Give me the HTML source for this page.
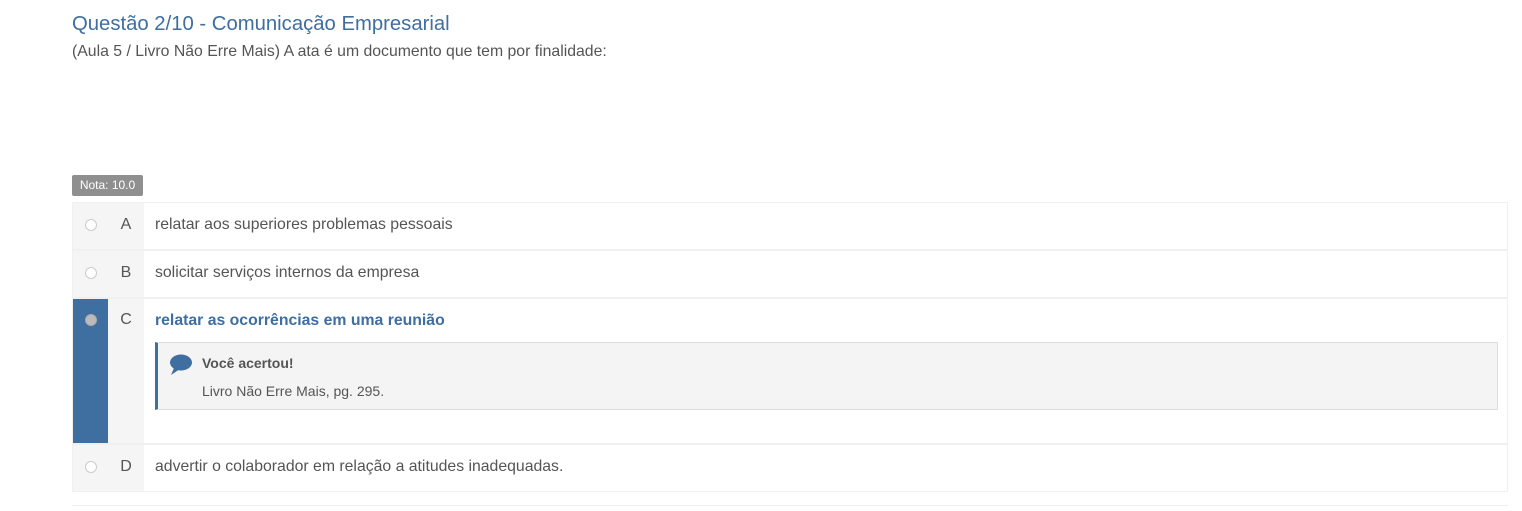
<!DOCTYPE html>
<html><head><meta charset="utf-8"><style>
body{margin:0;background:#fff;width:1522px;height:511px;overflow:hidden;font-family:"Liberation Sans",Arial,sans-serif;position:relative}
.t{position:absolute;left:72px;top:13px;font-size:20.3px;color:#3f6ea0}
.q{position:absolute;left:72px;top:43px;font-size:15.8px;color:#555}
.nota{position:absolute;left:72px;top:175px;width:71px;height:21px;background:#8f8f8f;color:#fff;font-size:12px;line-height:21px;text-align:center;border-radius:2px}
.row{position:absolute;left:72px;width:1436px;border:1px solid #f0f0f0;box-sizing:border-box}
.rad{position:absolute;left:0;top:0;bottom:0;width:36px;background:#f5f5f5}
.let{position:absolute;left:35px;top:0;bottom:0;width:36px;background:#f5f5f5;color:#555;font-size:16px;text-align:center}
.rc{position:absolute;left:12px;width:12px;height:12px;border:1px solid #ccc;border-radius:50%;background:#fff;box-sizing:border-box}
.txt{position:absolute;left:82px;font-size:15.8px;color:#555}
</style></head><body>
<div class="t">Questão 2/10 - Comunicação Empresarial</div>
<div class="q">(Aula 5 / Livro Não Erre Mais) A ata é um documento que tem por finalidade:</div>
<div class="nota">Nota: 10.0</div>

<div class="row" style="top:202px;height:48px"><div class="rad"><div class="rc" style="top:16px"></div></div><div class="let" style="line-height:44px">A</div><div class="txt" style="top:13px">relatar aos superiores problemas pessoais</div></div>
<div class="row" style="top:250px;height:48px"><div class="rad"><div class="rc" style="top:16px"></div></div><div class="let" style="line-height:44px">B</div><div class="txt" style="top:13px">solicitar serviços internos da empresa</div></div>
<div class="row" style="top:298px;height:146px"><div class="rad" style="background:#3f6ea0"><div class="rc" style="top:15px;background:#bbb;border-color:#aaa"></div></div><div class="let" style="line-height:42px">C</div><div class="txt" style="top:13px;color:#3f6ea0;font-weight:bold">relatar as ocorrências em uma reunião</div>
<div style="position:absolute;left:82px;top:43px;width:1343px;height:68px;background:#f4f4f4;border:1px solid #ddd;border-left:3px solid #3f6ea0;box-sizing:border-box">
<svg style="position:absolute;left:11px;top:11px" width="24" height="22" viewBox="0 0 24 22"><ellipse cx="12" cy="8.5" rx="11" ry="8" fill="#3f6ea0"/><path d="M5 14 L2 21 L11 15 Z" fill="#3f6ea0"/></svg>
<div style="position:absolute;left:44px;top:12px;font-size:14px;font-weight:bold;color:#555">Você acertou!</div>
<div style="position:absolute;left:44px;top:40px;font-size:14px;color:#555">Livro Não Erre Mais, pg. 295.</div>
</div></div>
<div class="row" style="top:444px;height:48px"><div class="rad"><div class="rc" style="top:16px"></div></div><div class="let" style="line-height:44px">D</div><div class="txt" style="top:13px">advertir o colaborador em relação a atitudes inadequadas.</div></div>
<div style="position:absolute;left:72px;top:505px;width:1436px;height:1px;background:#eee"></div>
</body></html>
